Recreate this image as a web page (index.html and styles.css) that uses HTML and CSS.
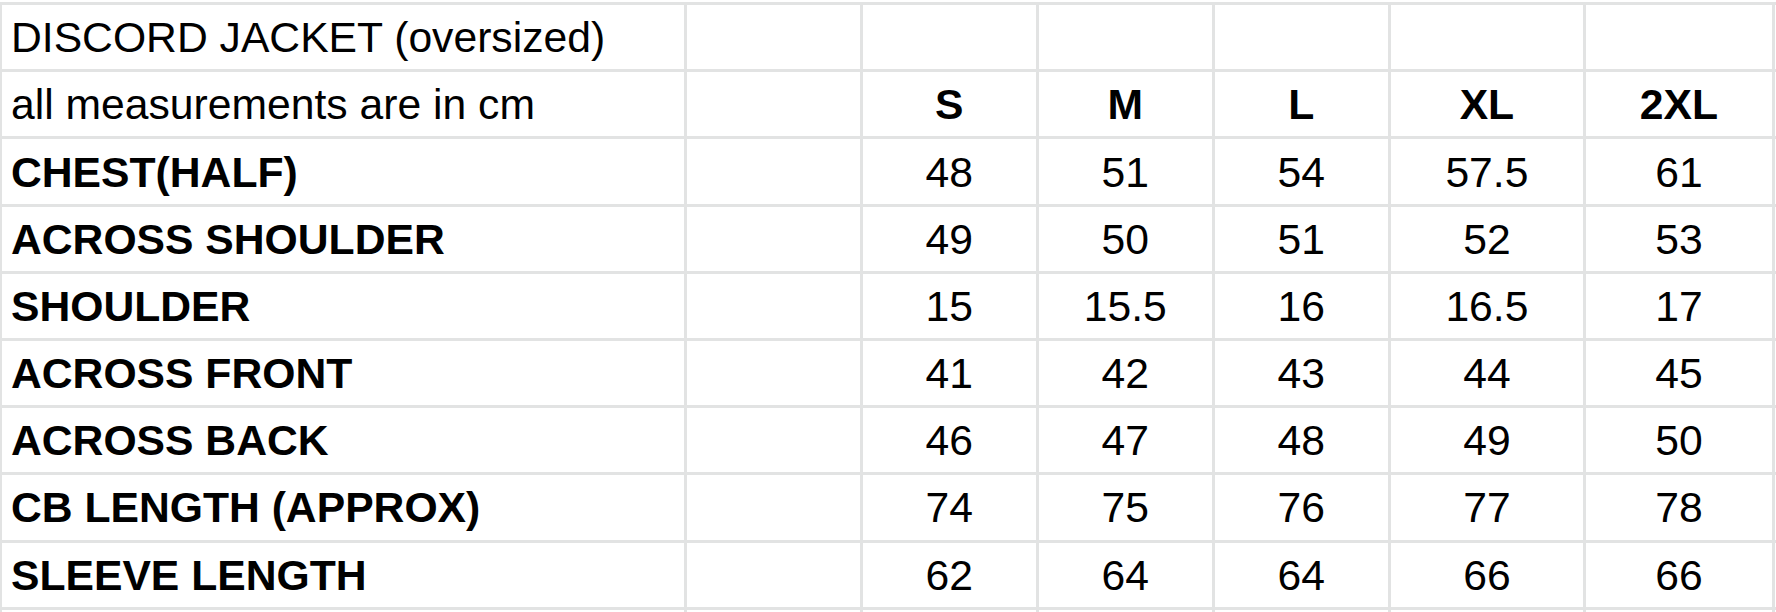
FILE: index.html
```html
<!DOCTYPE html>
<html>
<head>
<meta charset="utf-8">
<link rel="stylesheet" href="styles.css">
</head>
<body>
<div class="sheet">
  <div class="cell">DISCORD JACKET (oversized)</div><div class="cell"></div><div class="cell"></div><div class="cell"></div><div class="cell"></div><div class="cell"></div><div class="cell"></div><div class="cell"></div>
  <div class="cell">all measurements are in cm</div><div class="cell"></div><div class="cell c b">S</div><div class="cell c b">M</div><div class="cell c b">L</div><div class="cell c b">XL</div><div class="cell c b">2XL</div><div class="cell"></div>
  <div class="cell b">CHEST(HALF)</div><div class="cell"></div><div class="cell c">48</div><div class="cell c">51</div><div class="cell c">54</div><div class="cell c">57.5</div><div class="cell c">61</div><div class="cell"></div>
  <div class="cell b">ACROSS SHOULDER</div><div class="cell"></div><div class="cell c">49</div><div class="cell c">50</div><div class="cell c">51</div><div class="cell c">52</div><div class="cell c">53</div><div class="cell"></div>
  <div class="cell b">SHOULDER</div><div class="cell"></div><div class="cell c">15</div><div class="cell c">15.5</div><div class="cell c">16</div><div class="cell c">16.5</div><div class="cell c">17</div><div class="cell"></div>
  <div class="cell b">ACROSS FRONT</div><div class="cell"></div><div class="cell c">41</div><div class="cell c">42</div><div class="cell c">43</div><div class="cell c">44</div><div class="cell c">45</div><div class="cell"></div>
  <div class="cell b">ACROSS BACK</div><div class="cell"></div><div class="cell c">46</div><div class="cell c">47</div><div class="cell c">48</div><div class="cell c">49</div><div class="cell c">50</div><div class="cell"></div>
  <div class="cell b">CB LENGTH (APPROX)</div><div class="cell"></div><div class="cell c">74</div><div class="cell c">75</div><div class="cell c">76</div><div class="cell c">77</div><div class="cell c">78</div><div class="cell"></div>
  <div class="cell b">SLEEVE LENGTH</div><div class="cell"></div><div class="cell c">62</div><div class="cell c">64</div><div class="cell c">64</div><div class="cell c">66</div><div class="cell c">66</div><div class="cell"></div>
  <div class="cell"></div><div class="cell"></div><div class="cell"></div><div class="cell"></div><div class="cell"></div><div class="cell"></div><div class="cell"></div><div class="cell"></div>
</div>
</body>
</html>
```
FILE: styles.css
```css
html, body {
  margin: 0;
  padding: 0;
  background: #ffffff;
  overflow: hidden;
  width: 1776px;
  height: 612px;
}
.sheet {
  display: grid;
  grid-template-columns: 681.8px 173px 173px 173px 173px 192.2px 185.8px 1px;
  grid-template-rows: repeat(9, 64.2px) 2px;
  gap: 3px;
  padding: 3px 0 0 3px;
  margin: 2px 0 0 -1px;
  width: max-content;
  background: #e2e3e3;
  font-family: "Liberation Sans", Arial, sans-serif;
  font-size: 42.67px;
  color: #000000;
}
.cell {
  background: #ffffff;
  display: flex;
  align-items: flex-end;
  padding: 0 9px 7px 9px;
  white-space: nowrap;
  overflow: visible;
  line-height: 1.15;
  min-width: 0;
  min-height: 0;
}
.sheet > .cell:nth-child(8n) {
  padding: 0;
}
.sheet > .cell:nth-child(n+73) {
  padding: 0;
}
.c {
  justify-content: center;
}
.b {
  font-weight: 700;
}
```
